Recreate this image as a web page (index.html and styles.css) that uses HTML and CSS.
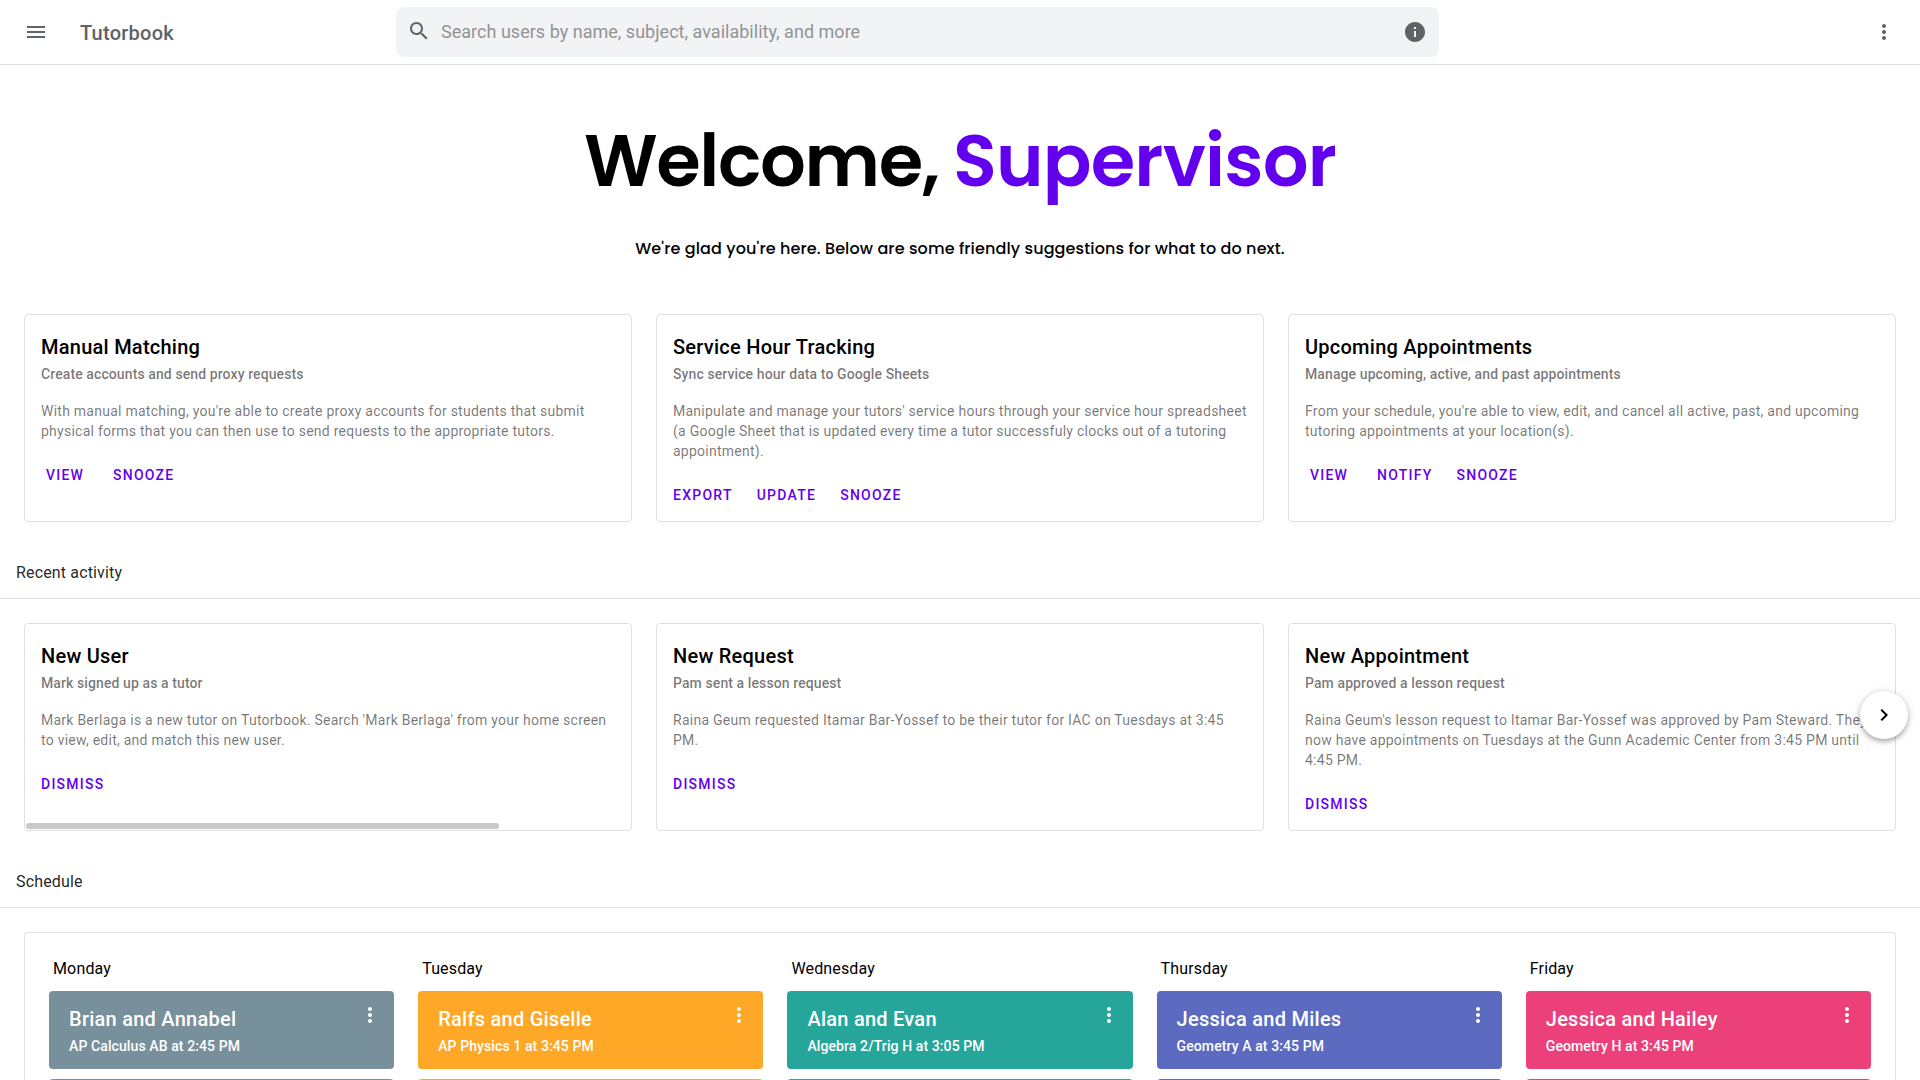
FILE: index.html
```html
<!DOCTYPE html>
<html lang="en">
<head>
<meta charset="utf-8">
<title>Tutorbook</title>
<link rel="stylesheet" href="styles.css">
</head>
<body>
<svg class="sprite" aria-hidden="true">
  <symbol id="more" viewBox="0 0 24 24"><path d="M12 8c1.1 0 2-.9 2-2s-.9-2-2-2-2 .9-2 2 .9 2 2 2zm0 2c-1.1 0-2 .9-2 2s.9 2 2 2 2-.9 2-2-.9-2-2-2zm0 6c-1.1 0-2 .9-2 2s.9 2 2 2 2-.9 2-2-.9-2-2-2z"/></symbol>
</svg>
<header class="topbar">
  <div class="topbar-start">
    <svg class="icon" viewBox="0 0 24 24"><path d="M3 18h18v-2H3v2zm0-5h18v-2H3v2zm0-7v2h18V6H3z"/></svg>
    <span class="brand">Tutorbook</span>
  </div>
  <div class="search">
    <svg class="icon search-icon" viewBox="0 0 24 24"><path d="M15.5 14h-.79l-.28-.27C15.41 12.59 16 11.11 16 9.5 16 5.91 13.09 3 9.5 3S3 5.91 3 9.5 5.91 16 9.5 16c1.61 0 3.09-.59 4.23-1.57l.27.28v.79l5 4.99L20.49 19l-4.99-5zm-6 0C7.01 14 5 11.99 5 9.5S7.01 5 9.5 5 14 7.01 14 9.5 11.99 14 9.5 14z"/></svg>
    <span class="search-text">Search users by name, subject, availability, and more</span>
    <svg class="icon" viewBox="0 0 24 24"><path d="M12 2C6.48 2 2 6.48 2 12s4.48 10 10 10 10-4.480 10-10S17.520 2 12 2zm1 15h-2v-6h2v6zm0-8h-2V7h2v2z"/></svg>
  </div>
  <div class="topbar-end"><svg class="icon"><use href="#more"/></svg></div>
</header>
<main>
  <section class="hero">
    <h1><span class="hello">Welcome,</span> <span class="name">Supervisor</span></h1>
    <p>We're glad you're here. Below are some friendly suggestions for what to do next.</p>
  </section>

  <div class="cards">
    <article class="card">
      <h2>Manual Matching</h2>
      <h3>Create accounts and send proxy requests</h3>
      <p>With manual matching, you're able to create proxy accounts for students that submit physical forms that you can then use to send requests to the appropriate tutors.</p>
      <div class="actions"><button>View</button><button>Snooze</button></div>
    </article>
    <article class="card">
      <h2>Service Hour Tracking</h2>
      <h3>Sync service hour data to Google Sheets</h3>
      <p>Manipulate and manage your tutors' service hours through your service hour spreadsheet (a Google Sheet that is updated every time a tutor successfuly clocks out of a tutoring appointment).</p>
      <div class="actions"><button>Export</button><button>Update</button><button>Snooze</button></div>
    </article>
    <article class="card">
      <h2>Upcoming Appointments</h2>
      <h3>Manage upcoming, active, and past appointments</h3>
      <p>From your schedule, you're able to view, edit, and cancel all active, past, and upcoming tutoring appointments at your location(s).</p>
      <div class="actions"><button>View</button><button>Notify</button><button>Snooze</button></div>
    </article>
  </div>

  <h4 class="section-title">Recent activity</h4>
  <div class="cards">
    <article class="card">
      <h2>New User</h2>
      <h3>Mark signed up as a tutor</h3>
      <p>Mark Berlaga is a new tutor on Tutorbook. Search 'Mark Berlaga' from your home screen to view, edit, and match this new user.</p>
      <div class="actions"><button>Dismiss</button></div>
    </article>
    <article class="card">
      <h2>New Request</h2>
      <h3>Pam sent a lesson request</h3>
      <p>Raina Geum requested Itamar Bar-Yossef to be their tutor for IAC on Tuesdays at 3:45 PM.</p>
      <div class="actions"><button>Dismiss</button></div>
    </article>
    <article class="card">
      <h2>New Appointment</h2>
      <h3>Pam approved a lesson request</h3>
      <p>Raina Geum's lesson request to Itamar Bar-Yossef was approved by Pam Steward. They now have appointments on Tuesdays at the Gunn Academic Center from 3:45 PM until 4:45 PM.</p>
      <div class="actions"><button>Dismiss</button></div>
    </article>
    <div class="scroll-thumb"></div>
    <div class="next"><svg class="icon" viewBox="0 0 24 24"><path d="M10 6L8.590 7.410 13.170 12l-4.580 4.590L10 18l6-6z"/></svg></div>
  </div>

  <h4 class="section-title">Schedule</h4>
  <div class="schedule">
    <div class="day slate">
      <h5>Monday</h5>
      <div class="event"><div><h2>Brian and Annabel</h2><h3>AP Calculus AB at 2:45 PM</h3></div><svg class="icon"><use href="#more"/></svg></div>
      <div class="event"></div>
    </div>
    <div class="day orange">
      <h5>Tuesday</h5>
      <div class="event"><div><h2>Ralfs and Giselle</h2><h3>AP Physics 1 at 3:45 PM</h3></div><svg class="icon"><use href="#more"/></svg></div>
      <div class="event"></div>
    </div>
    <div class="day teal">
      <h5>Wednesday</h5>
      <div class="event"><div><h2>Alan and Evan</h2><h3>Algebra 2/Trig H at 3:05 PM</h3></div><svg class="icon"><use href="#more"/></svg></div>
      <div class="event"></div>
    </div>
    <div class="day indigo">
      <h5>Thursday</h5>
      <div class="event"><div><h2>Jessica and Miles</h2><h3>Geometry A at 3:45 PM</h3></div><svg class="icon"><use href="#more"/></svg></div>
      <div class="event"></div>
    </div>
    <div class="day pink">
      <h5>Friday</h5>
      <div class="event"><div><h2>Jessica and Hailey</h2><h3>Geometry H at 3:45 PM</h3></div><svg class="icon"><use href="#more"/></svg></div>
      <div class="event"></div>
    </div>
  </div>
</main>
</body>
</html>
```
FILE: styles.css
```css
* { box-sizing: border-box; }
html, body { height: 100%; }
body {
  margin: 0;
  overflow: hidden;
  background: #fff;
  color: #000;
  font-family: Roboto, "Noto Sans", sans-serif;
}
h1, h2, h3, h4, h5, p { margin: 0; font-weight: 400; }
.sprite { display: none; }
.icon { display: block; flex: none; width: 24px; height: 24px; fill: currentColor; }

.topbar {
  display: grid;
  grid-template-columns: 396px 1043px 1fr;
  height: 65px;
  border-bottom: 1px solid #e0e0e0;
  color: #5f6368;
}
.topbar-start { display: flex; align-items: center; gap: 32px; padding-left: 24px; }
.brand { font-size: 20px; font-weight: 500; line-height: 32px; letter-spacing: .25px; padding-top: 2px; }
.search {
  display: flex;
  align-items: center;
  height: 50px;
  margin-top: 7px;
  padding: 0 12.5px 0 11px;
  border-radius: 8px;
  background: #f1f3f4;
}
.search-icon { margin-bottom: 2px; }
.search-text { flex: 1; padding-left: 10px; font-size: 18px; line-height: 24px; letter-spacing: .02px; padding-bottom: 1px; color: #929496; white-space: nowrap; }
.topbar-end { display: flex; align-items: center; justify-content: flex-end; padding-right: 24px; }

.hero {
  height: 249px;
  padding-top: 42px;
  text-align: center;
  font-family: Poppins, Inter, sans-serif;
}
.hero h1 { height: 108px; font-size: 72px; font-weight: 600; line-height: 108px; word-spacing: -3px; white-space: nowrap; }
.hello { letter-spacing: -1.35px; }
.name { letter-spacing: -.8px; color: #6200ee; }
.hero p { margin-top: 22px; font-size: 16px; font-weight: 500; line-height: 24px; letter-spacing: .12px; white-space: nowrap; }

.cards {
  position: relative;
  display: grid;
  grid-template-columns: repeat(3, 1fr);
  gap: 24px;
  margin: 0 24px;
}
.card { height: 208px; padding: 16px 0 8px; border: 1px solid #e0e0e0; border-radius: 4px; }
.card h2, .event h2 { font-size: 20px; font-weight: 500; line-height: 32px; letter-spacing: .25px; }
.card h3, .event h3 { font-size: 14px; font-weight: 500; line-height: 22px; letter-spacing: .1px; }
.card h2, .card h3 { padding: 0 16px; }
.card h3 { color: rgba(0, 0, 0, .54); }
.card p {
  padding: 16px 16px 8px;
  font-size: 14px;
  line-height: 20px;
  letter-spacing: .25px;
  color: rgba(0, 0, 0, .54);
}
.actions { display: flex; gap: 8px; padding: 8px 8px 0; }
.actions button {
  min-width: 64px;
  height: 36px;
  padding: 0 8px;
  border: 0;
  background: none;
  color: #6200ee;
  font: 500 14px/36px Roboto, sans-serif;
  letter-spacing: 1.25px;
  text-transform: uppercase;
}

.section-title {
  margin: 24px 0;
  padding: 13px 16px 11px;
  border-bottom: 1px solid #e0e0e0;
  font-size: 16px;
  line-height: 28px;
  letter-spacing: .15px;
  color: rgba(0, 0, 0, .87);
}

.scroll-thumb {
  position: absolute;
  left: 2px;
  bottom: 2px;
  width: 473px;
  height: 6px;
  border-radius: 3px;
  background: #c9c9c9;
}
.next {
  position: absolute;
  top: 68px;
  right: -12px;
  display: flex;
  align-items: center;
  justify-content: center;
  width: 48px;
  height: 48px;
  border-radius: 50%;
  background: #fff;
  box-shadow: 0 3px 5px -1px rgba(0, 0, 0, .2), 0 2px 6px rgba(0, 0, 0, .14), 0 1px 10px rgba(0, 0, 0, .12);
}

.schedule {
  display: grid;
  grid-template-columns: repeat(5, 1fr);
  gap: 24px;
  height: 148px;
  margin: 0 24px;
  padding: 22px 24px 0;
  overflow: hidden;
  border: 1px solid #e0e0e0;
  border-bottom: 0;
  border-radius: 4px 4px 0 0;
}
.day h5 { padding: 0 4px; margin-bottom: 8px; font-size: 16px; line-height: 28px; letter-spacing: .15px; }
.event {
  display: flex;
  justify-content: space-between;
  height: 78px;
  margin-bottom: 10px;
  padding: 12px 12px 12px 20px;
  border-radius: 4px;
  color: #fff;
}
.slate .event { background: #78909c; }
.orange .event { background: #ffa726; }
.teal .event { background: #26a69a; }
.indigo .event { background: #5c6bc0; }
.pink .event { background: #ec407a; }
```
